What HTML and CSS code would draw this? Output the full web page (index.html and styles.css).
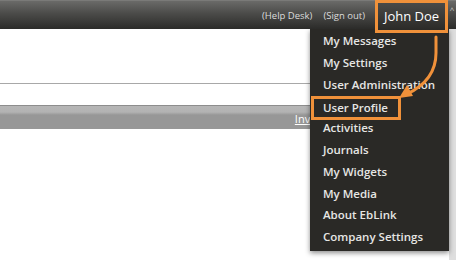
FILE: index.html
```html
<!DOCTYPE html>
<html lang="en">
<head>
  <meta charset="UTF-8" />
  <title>EbLink - User menu</title>
  <link rel="stylesheet" href="styles.css">
</head>
<body>
  <header class="topbar">
    <nav class="toplinks">
      <a href="#">(Help Desk)</a>
      <a href="#">(Sign out)</a>
    </nav>
    <div class="user-box">John Doe</div>
    <span class="caret">^</span>
  </header>

  <div class="page">
    <div class="page-main">
      <div class="panel-top"></div>
      <div class="panel-gap"></div>
      <div class="toolbar"><a href="#">Invite</a></div>
    </div>
    <div class="scroll-strip"></div>

    <ul class="user-menu">
      <li><a href="#">My Messages</a></li>
      <li><a href="#">My Settings</a></li>
      <li><a href="#">User Administration</a></li>
      <li class="marked"><a href="#">User Profile</a></li>
      <li><a href="#">Activities</a></li>
      <li><a href="#">Journals</a></li>
      <li><a href="#">My Widgets</a></li>
      <li><a href="#">My Media</a></li>
      <li><a href="#">About EbLink</a></li>
      <li><a href="#">Company Settings</a></li>
    </ul>

    <svg class="pointer" width="60" height="80" viewBox="0 0 60 80">
      <path d="M46 6 L46 22 C46 40 36 54 17 63" fill="none" stroke="#f0913a" stroke-width="3" stroke-linecap="round"/>
      <path d="M9 67 L17 54 L23 65 Z" fill="#f0913a"/>
    </svg>
  </div>
</body>
</html>
```

FILE: styles.css
```css
body {
  margin: 0;
  font-family: 'Open Sans', 'DejaVu Sans', sans-serif;
  background: #fff;
  width: 456px;
  height: 260px;
  overflow: hidden;
}
.topbar {
  height: 29px;
  display: flex;
  align-items: flex-start;
  justify-content: flex-end;
  background: linear-gradient(#8a8a88 0, #6a6a68 1px, #4a4a48 14px, #2b2b29 29px);
  position: relative;
  z-index: 3;
}
.toplinks {
  display: flex;
  gap: 11px;
  padding-top: 9px;
  margin-right: 10px;
}
.toplinks a {
  color: #dcdcdc;
  font-size: 9.5px;
  text-decoration: none;
}
.user-box {
  width: 67px;
  height: 27px;
  border: 3px solid #f0913a;
  background: linear-gradient(#4a4a48, #2b2a27);
  color: #fff;
  font-size: 13px;
  line-height: 27px;
  text-align: center;
}
.caret {
  width: 8px;
  color: #ccc;
  font-size: 8px;
  padding-top: 4px;
  text-align: center;
}
.page {
  display: flex;
  position: relative;
  height: 231px;
}
.page-main {
  flex: 1;
}
.panel-top {
  height: 54px;
  border-bottom: 1px solid #a8a8a8;
}
.panel-gap {
  height: 21px;
}
.toolbar {
  height: 23px;
  border-top: 1px solid #8d8d8d;
  background: linear-gradient(#b6b6b6 0, #b3b3b3 6px, #979797 9px, #979797 23px);
  text-align: right;
  padding-right: 126px;
  overflow: hidden;
}
.toolbar a {
  color: #fff;
  font-size: 11px;
  line-height: 22px;
}
.scroll-strip {
  width: 7px;
  background: #dedede;
}
.user-menu {
  position: absolute;
  left: 310px;
  top: 0;
  width: 139px;
  height: 221px;
  margin: 0;
  padding: 1px 0 0;
  list-style: none;
  background: #2a2926;
  box-shadow: 0 2px 5px rgba(0, 0, 0, 0.45);
  z-index: 2;
}
.user-menu li {
  height: 21.8px;
}
.user-menu a {
  display: block;
  padding-left: 13px;
  color: #e6e6e4;
  font-size: 11.5px;
  font-weight: 600;
  line-height: 21.8px;
  text-decoration: none;
  white-space: nowrap;
}
.user-menu li.marked a {
  display: inline-block;
  margin: -1px 0 0 1px;
  padding: 0 10px 0 9px;
  border: 3px solid #f0913a;
  line-height: 18px;
}
.pointer {
  position: absolute;
  left: 390px;
  top: 2px;
  z-index: 4;
}
```
